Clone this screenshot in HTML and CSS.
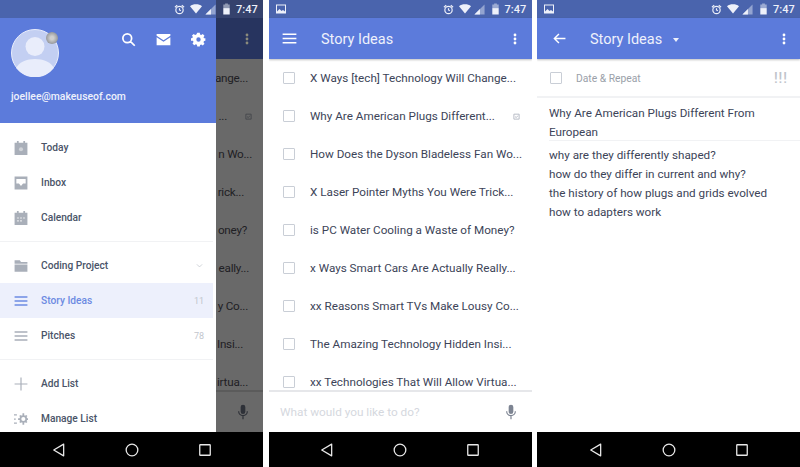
FILE: index.html

```html
<!DOCTYPE html>
<html lang="en">
<head>
  <meta charset="UTF-8">
  <title>Story Ideas</title>
  <link rel="stylesheet" href="styles.css">
</head>
<body>

<!-- Shared icons -->
<svg class="sprite" xmlns="http://www.w3.org/2000/svg">
  <symbol id="i-alarm" viewBox="0 0 24 24"><path fill="none" stroke="currentColor" stroke-width="2.6" d="M12 5a8 8 0 1 0 0 16a8 8 0 0 0 0-16zM12 9v4l3 2M2 7l5-4.500M22 7l-5-4.500"/></symbol>
  <symbol id="i-wifi" viewBox="0 0 24 24"><path fill="currentColor" d="M12 21L0 6.500C3.200 3.800 7.400 2.500 12 2.500s8.800 1.300 12 4z"/></symbol>
  <symbol id="i-signal" viewBox="0 0 24 24"><path fill="currentColor" opacity=".45" d="M23 1v22H1z"/><path fill="currentColor" d="M13 11v12H1z"/></symbol>
  <symbol id="i-battery" viewBox="0 0 24 24"><path fill="currentColor" opacity=".5" d="M9 0h6v2h4v8H5V2h4z"/><path fill="currentColor" d="M5 10h14v14H5z"/></symbol>
  <symbol id="i-picture" viewBox="0 0 24 24"><path fill="currentColor" d="M2 3h20v18H2zM4 5v12l5-5 4 4 3-2 4 3V5z"/></symbol>
  <symbol id="i-search" viewBox="0 0 24 24"><path fill="none" stroke="currentColor" stroke-width="2.800" d="M10 3a7 7 0 1 0 0 14a7 7 0 0 0 0-14zM15 15l7 7"/></symbol>
  <symbol id="i-mail" viewBox="0 0 24 24"><path fill="currentColor" d="M1 3h22v3L12 13 1 6zM1 8.500l11 7 11-7V21H1z"/></symbol>
  <symbol id="i-gear" viewBox="0 0 24 24"><path fill="currentColor" fill-rule="evenodd" d="M10 1h4l.5 2.800 1.900.8 2.400-1.600 2.800 2.800-1.600 2.400.8 1.900L23 10v4l-2.200.5-.8 1.900 1.600 2.400-2.800 2.800-2.400-1.600-1.900.8L14 23h-4l-.5-2.700-1.900-.8-2.400 1.600-2.800-2.800 1.600-2.400-.8-1.900L0 14v-4l2.200-.5.8-1.900L1.400 5.800 4.200 3l2.400 1.600 1.900-.8zM12 8.500a3.500 3.500 0 1 0 0 7a3.500 3.500 0 0 0 0-7z"/></symbol>
  <symbol id="i-menu" viewBox="0 0 24 24"><path fill="currentColor" d="M1 4h22v2.500H1zM1 10.750h22v2.500H1zM1 17.500h22V20H1z"/></symbol>
  <symbol id="i-dots" viewBox="0 0 24 24"><circle fill="currentColor" cx="12" cy="4" r="2.800"/><circle fill="currentColor" cx="12" cy="12" r="2.800"/><circle fill="currentColor" cx="12" cy="20" r="2.800"/></symbol>
  <symbol id="i-back" viewBox="0 0 24 24"><path fill="none" stroke="currentColor" stroke-width="2.600" d="M23 12H3M11 3.500L2.500 12l8.500 8.500"/></symbol>
  <symbol id="i-mic" viewBox="0 0 24 24"><path fill="currentColor" d="M12 1a3.500 3.500 0 0 0-3.500 3.500v7a3.500 3.500 0 0 0 7 0v-7A3.500 3.500 0 0 0 12 1z"/><path fill="none" stroke="currentColor" stroke-width="1.800" d="M5.500 11a6.500 6.500 0 0 0 13 0M12 17.500V23"/></symbol>
  <symbol id="i-nav-back" viewBox="0 0 24 24"><path fill="none" stroke="currentColor" stroke-width="2.200" stroke-linejoin="round" d="M20 2v20L3 12z"/></symbol>
  <symbol id="i-nav-home" viewBox="0 0 24 24"><circle fill="none" stroke="currentColor" stroke-width="2.200" cx="12" cy="12" r="10"/></symbol>
  <symbol id="i-nav-recent" viewBox="0 0 24 24"><rect fill="none" stroke="currentColor" stroke-width="2.200" x="3" y="3" width="18" height="18" rx="1"/></symbol>
  <symbol id="i-today" viewBox="0 0 24 24"><path fill="currentColor" d="M1 3h4V0h3v3h8V0h3v3h4v21H1z"/><circle fill="#fff" opacity=".45" cx="12" cy="14" r="3.500"/></symbol>
  <symbol id="i-inbox" viewBox="0 0 24 24"><path fill="currentColor" fill-rule="evenodd" d="M1 1h22v22H1zM4 5v8h4.500l3.500 4 3.500-4H20V5z"/></symbol>
  <symbol id="i-calendar" viewBox="0 0 24 24"><path fill="currentColor" d="M1 3h4V0h3v3h8V0h3v3h4v21H1z"/><path fill="#fff" opacity=".7" d="M5 11h3.500v2H5zM10.250 11h3.500v2h-3.500zM15.500 11H19v2h-3.500zM5 16h3.500v2H5zM10.250 16h3.500v2h-3.500z"/></symbol>
  <symbol id="i-folder" viewBox="0 0 24 24"><path fill="currentColor" d="M1 2h9l2 3h11v3H1zM1 9.500h22V22H1z"/></symbol>
  <symbol id="i-plus" viewBox="0 0 24 24"><path fill="currentColor" d="M11 1h2v10h10v2H13v10h-2V13H1v-2h10z"/></symbol>
  <symbol id="i-manage" viewBox="0 0 24 24"><path fill="currentColor" d="M0 4h5v2.200H0zM0 11h3v2.200H0zM0 18h5v2.200H0z"/><path fill="none" stroke="currentColor" stroke-width="3" d="M16 7a5 5 0 1 0 0 10a5 5 0 0 0 0-10zM16 2v4M16 18v4M7 12h3M22 12h2M10 6l2 2M20 16l2 2M22 6l-2 2M12 16l-2 2"/></symbol>
  <symbol id="i-chevron" viewBox="0 0 24 24"><path fill="none" stroke="currentColor" stroke-width="2.600" d="M3 8l9 9 9-9"/></symbol>
  <symbol id="i-note" viewBox="0 0 24 24"><path fill="none" stroke="currentColor" stroke-width="3" d="M3 4h18v17H3z"/><path fill="none" stroke="currentColor" stroke-width="3" d="M7 12l4 4 6-7"/></symbol>
</svg>

<div class="screens">

  <!-- Phone 1: drawer open over the list -->
  <div class="phone">
    <div class="status status-drawer">
      <span class="status-spacer"></span>
      <svg class="st-alarm"><use href="#i-alarm"/></svg>
      <svg class="st-wifi"><use href="#i-wifi"/></svg>
      <svg class="st-signal"><use href="#i-signal"/></svg>
      <svg class="st-battery"><use href="#i-battery"/></svg>
      <span class="st-time">7:47</span>
    </div>
    <div class="split">
      <div class="drawer">
        <div class="drawer-head">
          <div class="head-top">
            <div class="avatar">
              <svg viewBox="0 0 48 48"><circle cx="24" cy="24" r="23.500" fill="#c3cff2" stroke="#e9edfb"/><circle cx="24" cy="17.500" r="9.500" fill="#e9edfb"/><path d="M5 39c3-6 11-9 19-9s16 3 19 9a24 24 0 0 1-38 0z" fill="#e9edfb"/></svg>
              <span class="avatar-badge"></span>
            </div>
            <svg class="head-icon"><use href="#i-search"/></svg>
            <svg class="head-icon"><use href="#i-mail"/></svg>
            <svg class="head-icon"><use href="#i-gear"/></svg>
          </div>
          <div class="head-mail">joellee@makeuseof.com</div>
        </div>
        <div class="drawer-group">
          <div class="drawer-row"><svg class="row-icon"><use href="#i-today"/></svg><span class="row-label">Today</span></div>
          <div class="drawer-row"><svg class="row-icon"><use href="#i-inbox"/></svg><span class="row-label">Inbox</span></div>
          <div class="drawer-row"><svg class="row-icon"><use href="#i-calendar"/></svg><span class="row-label">Calendar</span></div>
        </div>
        <div class="drawer-group">
          <div class="drawer-row"><svg class="row-icon"><use href="#i-folder"/></svg><span class="row-label">Coding Project</span><svg class="row-chevron"><use href="#i-chevron"/></svg></div>
          <div class="drawer-row is-active"><svg class="row-icon"><use href="#i-menu"/></svg><span class="row-label">Story Ideas</span><span class="row-count">11</span></div>
          <div class="drawer-row"><svg class="row-icon"><use href="#i-menu"/></svg><span class="row-label">Pitches</span><span class="row-count">78</span></div>
        </div>
        <div class="drawer-group">
          <div class="drawer-row"><svg class="row-icon"><use href="#i-plus"/></svg><span class="row-label">Add List</span></div>
          <div class="drawer-row"><svg class="row-icon"><use href="#i-manage"/></svg><span class="row-label">Manage List</span></div>
        </div>
      </div>

      <!-- What still shows of the list beside the drawer -->
      <div class="dim">
        <div class="dim-bar"><svg class="ab-dots"><use href="#i-dots"/></svg></div>
        <div class="dim-list">
          <div class="dim-row">ange...</div>
          <div class="dim-row">...<svg class="task-note"><use href="#i-note"/></svg></div>
          <div class="dim-row">n Wo...</div>
          <div class="dim-row">rick...</div>
          <div class="dim-row">oney?</div>
          <div class="dim-row">eally...</div>
          <div class="dim-row">y Co...</div>
          <div class="dim-row">Insi...</div>
          <div class="dim-row">irtua...</div>
        </div>
        <div class="dim-foot"><svg class="composer-mic"><use href="#i-mic"/></svg></div>
      </div>
    </div>
    <div class="navbar">
      <svg><use href="#i-nav-back"/></svg>
      <svg><use href="#i-nav-home"/></svg>
      <svg><use href="#i-nav-recent"/></svg>
    </div>
  </div>

  <!-- Phone 2: the list -->
  <div class="phone">
    <div class="status">
      <svg class="st-picture"><use href="#i-picture"/></svg>
      <span class="status-spacer"></span>
      <svg class="st-alarm"><use href="#i-alarm"/></svg>
      <svg class="st-wifi"><use href="#i-wifi"/></svg>
      <svg class="st-signal"><use href="#i-signal"/></svg>
      <svg class="st-battery"><use href="#i-battery"/></svg>
      <span class="st-time">7:47</span>
    </div>
    <div class="appbar">
      <svg class="ab-menu"><use href="#i-menu"/></svg>
      <span class="ab-title">Story Ideas</span>
      <svg class="ab-dots"><use href="#i-dots"/></svg>
    </div>
    <div class="task-list">
      <div class="task"><span class="box"></span><span class="task-text">X Ways [tech] Technology Will Change...</span></div>
      <div class="task"><span class="box"></span><span class="task-text">Why Are American Plugs Different...</span><svg class="task-note"><use href="#i-note"/></svg></div>
      <div class="task"><span class="box"></span><span class="task-text">How Does the Dyson Bladeless Fan Wo...</span></div>
      <div class="task"><span class="box"></span><span class="task-text">X Laser Pointer Myths You Were Trick...</span></div>
      <div class="task"><span class="box"></span><span class="task-text">is PC Water Cooling a Waste of Money?</span></div>
      <div class="task"><span class="box"></span><span class="task-text">x Ways Smart Cars Are Actually Really...</span></div>
      <div class="task"><span class="box"></span><span class="task-text">xx Reasons Smart TVs Make Lousy Co...</span></div>
      <div class="task"><span class="box"></span><span class="task-text">The Amazing Technology Hidden Insi...</span></div>
      <div class="task"><span class="box"></span><span class="task-text">xx Technologies That Will Allow Virtua...</span></div>
    </div>
    <div class="composer">
      <span class="composer-hint">What would you like to do?</span>
      <svg class="composer-mic"><use href="#i-mic"/></svg>
    </div>
    <div class="navbar">
      <svg><use href="#i-nav-back"/></svg>
      <svg><use href="#i-nav-home"/></svg>
      <svg><use href="#i-nav-recent"/></svg>
    </div>
  </div>

  <!-- Phone 3: task detail -->
  <div class="phone">
    <div class="status">
      <svg class="st-picture"><use href="#i-picture"/></svg>
      <span class="status-spacer"></span>
      <svg class="st-alarm"><use href="#i-alarm"/></svg>
      <svg class="st-wifi"><use href="#i-wifi"/></svg>
      <svg class="st-signal"><use href="#i-signal"/></svg>
      <svg class="st-battery"><use href="#i-battery"/></svg>
      <span class="st-time">7:47</span>
    </div>
    <div class="appbar">
      <svg class="ab-back"><use href="#i-back"/></svg>
      <span class="ab-title">Story Ideas</span>
      <span class="ab-caret"></span>
      <svg class="ab-dots"><use href="#i-dots"/></svg>
    </div>
    <div class="detail">
      <div class="detail-meta">
        <span class="box"></span>
        <span class="meta-label">Date &amp; Repeat</span>
        <span class="meta-priority">!!!</span>
      </div>
      <div class="detail-title">Why Are American Plugs Different From European</div>
      <div class="detail-notes">
        <p>why are they differently shaped?</p>
        <p>how do they differ in current and why?</p>
        <p>the history of how plugs and grids evolved</p>
        <p>how to adapters work</p>
      </div>
    </div>
    <div class="navbar">
      <svg><use href="#i-nav-back"/></svg>
      <svg><use href="#i-nav-home"/></svg>
      <svg><use href="#i-nav-recent"/></svg>
    </div>
  </div>

</div>
</body>
</html>
```

FILE: styles.css

```css
/* Global reset */
* {
  box-sizing: border-box;
  margin: 0;
  padding: 0;
}
html, body {
  height: 100%;
  background: #fff;
  font-family: 'Roboto', sans-serif;
  color: #3c4458;
  overflow: hidden;
}

.sprite {
  display: none;
}

/* Three phones side by side */
.screens {
  display: flex;
  gap: 5.5px;
  width: 800px;
  height: 467px;
}
.phone {
  width: 263px;
  height: 467px;
  flex: none;
  display: flex;
  flex-direction: column;
  overflow: hidden;
  background: #fff;
}

/* Status bar */
.status {
  height: 18px;
  flex: none;
  display: flex;
  align-items: center;
  padding: 0 6px 0 6px;
  background: #4a64ad;
  color: #eef1fa;
}
.status-drawer {
  background: linear-gradient(90deg, #4a64ad 216px, #35426d 216px);
}
.status-spacer {
  flex: 1;
}
.st-picture {
  width: 12px;
  height: 12px;
}
.st-alarm {
  width: 11px;
  height: 11px;
  margin-right: 5px;
}
.st-wifi {
  width: 12px;
  height: 12px;
  margin-right: 3px;
}
.st-signal {
  width: 11px;
  height: 11px;
  margin-right: 5px;
}
.st-battery {
  width: 11px;
  height: 12px;
  margin-right: 4px;
}
.st-time {
  font-size: 11px;
  font-weight: 500;
  width: 21px;
}

/* App bar */
.appbar {
  height: 41px;
  flex: none;
  display: flex;
  align-items: center;
  padding: 0 10.5px 0 13.5px;
  background: #5c7bdb;
  color: #fff;
  box-shadow: 0 1px 2px rgba(0,0,0,0.25);
  position: relative;
}
.ab-menu {
  width: 15px;
  height: 15px;
  flex: none;
}
.ab-back {
  width: 13px;
  height: 13px;
  flex: none;
  margin: 0 0.5px 0 2px;
}
.ab-title {
  margin: 2px 0 0 24px;
  font-size: 14.5px;
  color: #eef1fb;
}
.ab-caret {
  margin: 2px 0 0 11px;
  border-left: 3.5px solid transparent;
  border-right: 3.5px solid transparent;
  border-top: 4px solid #eef1fb;
}
.ab-dots {
  width: 12px;
  height: 12px;
  margin-left: auto;
}

/* Task list */
.task-list {
  flex: 1;
  min-height: 0;
  overflow: hidden;
}
.task {
  height: 38px;
  display: flex;
  align-items: center;
  padding-left: 14.5px;
  font-size: 11.7px;
}
.box {
  width: 12px;
  height: 12px;
  flex: none;
  border: 1.5px solid #c9ced6;
  border-radius: 1px;
}
.task-text {
  margin-left: 15px;
  white-space: nowrap;
}
.task-note {
  width: 7px;
  height: 7px;
  flex: none;
  margin-left: auto;
  margin-right: 12px;
  color: #b0b5c0;
}

/* Bottom input */
.composer {
  height: 42px;
  flex: none;
  display: flex;
  align-items: center;
  padding: 0 12.5px 0 11.5px;
  border-top: 2px solid #e6e7ea;
  background: #fff;
}
.composer-hint {
  font-size: 11.8px;
  color: #d5d8de;
}
.composer-mic {
  width: 16px;
  height: 16px;
  margin-left: auto;
  color: #7d8492;
}

/* Android nav bar */
.navbar {
  height: 35px;
  flex: none;
  display: flex;
  align-items: center;
  padding-left: 51.5px;
  gap: 59px;
  background: #000;
  color: #e8e8e8;
}
.navbar svg {
  width: 14px;
  height: 14px;
}

/* Drawer beside the dimmed list */
.split {
  flex: 1;
  min-height: 0;
  display: flex;
}
.drawer {
  width: 216px;
  flex: none;
  background: #fff;
  overflow: hidden;
}
.drawer-head {
  height: 105px;
  padding: 11px 10px 0 11px;
  background: #5c7bdb;
  color: #fff;
}
.head-top {
  display: flex;
  align-items: flex-start;
  gap: 20px;
}
.avatar {
  position: relative;
  width: 48px;
  height: 48px;
  margin-right: auto;
}
.avatar svg {
  display: block;
  width: 48px;
  height: 48px;
}
.avatar-badge {
  position: absolute;
  top: 3px;
  right: 1px;
  width: 12px;
  height: 12px;
  border-radius: 50%;
  background: radial-gradient(circle, #cfcfcf 20%, #929497 75%);
}
.head-icon {
  width: 15px;
  height: 15px;
  margin-top: 3px;
}
.head-mail {
  margin-top: 13px;
  font-size: 10.4px;
  font-weight: 500;
  color: #eef1fb;
}
.drawer-group {
  margin-right: 3px;
  padding: 6px 0;
  border-bottom: 1px solid #f1f2f4;
}
.drawer-head + .drawer-group {
  padding-top: 7px;
}
.drawer-group:last-child {
  border-bottom: none;
}
.drawer-row {
  height: 35px;
  display: flex;
  align-items: center;
  padding: 0 9px 0 13.5px;
  font-size: 10.2px;
}
.row-icon {
  width: 14px;
  height: 14px;
  flex: none;
  color: #a9afb9;
}
.row-label {
  margin-left: 13.5px;
  font-weight: 500;
  color: #4a5468;
}
.row-count {
  margin-left: auto;
  font-size: 9px;
  color: #c2c6cd;
}
.row-chevron {
  width: 7px;
  height: 7px;
  margin-left: auto;
  margin-right: 1px;
  color: #c2c6cd;
}
.is-active {
  background: #edf0fc;
}
.is-active .row-icon,
.is-active .row-label {
  color: #6c8ae2;
}

/* Dimmed list */
.dim {
  flex: 1;
  min-width: 0;
  display: flex;
  flex-direction: column;
  background: #696969;
}
.dim-bar {
  height: 41px;
  flex: none;
  display: flex;
  align-items: center;
  padding-right: 10.5px;
  background: #27345f;
  color: #8b8b7c;
}
.dim-list {
  flex: 1;
  min-height: 0;
  overflow: hidden;
}
.dim-row {
  height: 38px;
  display: flex;
  align-items: center;
  justify-content: flex-end;
  overflow: hidden;
  white-space: nowrap;
  font-size: 11.7px;
  letter-spacing: -0.25px;
  color: #1f2024;
}
.dim-row:nth-child(1) { padding-right: 15px; }
.dim-row:nth-child(3) { padding-right: 11px; }
.dim-row:nth-child(4) { padding-right: 19px; }
.dim-row:nth-child(5) { padding-right: 16px; }
.dim-row:nth-child(6) { padding-right: 14px; }
.dim-row:nth-child(7) { padding-right: 15px; }
.dim-row:nth-child(8) { padding-right: 20px; }
.dim-row:nth-child(9) { padding-right: 15px; }
.dim-row .task-note {
  margin-left: 18px;
  margin-right: 11px;
  color: #45474c;
}
.dim-foot {
  height: 42px;
  flex: none;
  display: flex;
  align-items: center;
  padding-right: 12.5px;
  border-top: 2px solid #5b5b5b;
}
.dim-foot .composer-mic {
  color: #2e3138;
}

/* Task detail */
.detail {
  flex: 1;
  min-height: 0;
}
.detail-meta {
  height: 39px;
  display: flex;
  align-items: center;
  padding: 1px 12px 0 13px;
  border-bottom: 2px solid #f1f2f4;
}
.meta-label {
  margin-left: 14px;
  font-size: 10.3px;
  color: #9a9fa9;
}
.meta-priority {
  margin-left: auto;
  font-size: 14px;
  font-weight: 500;
  letter-spacing: 1px;
  color: #c0c4cb;
}
.detail-title {
  margin-left: 12px;
  padding: 6px 20px 0 0;
  height: 43px;
  font-size: 11.7px;
  line-height: 19px;
  border-bottom: 1px solid #f1f2f4;
}
.detail-notes {
  margin-left: 12px;
  padding-top: 5px;
  font-size: 11.7px;
  line-height: 19px;
}
```
